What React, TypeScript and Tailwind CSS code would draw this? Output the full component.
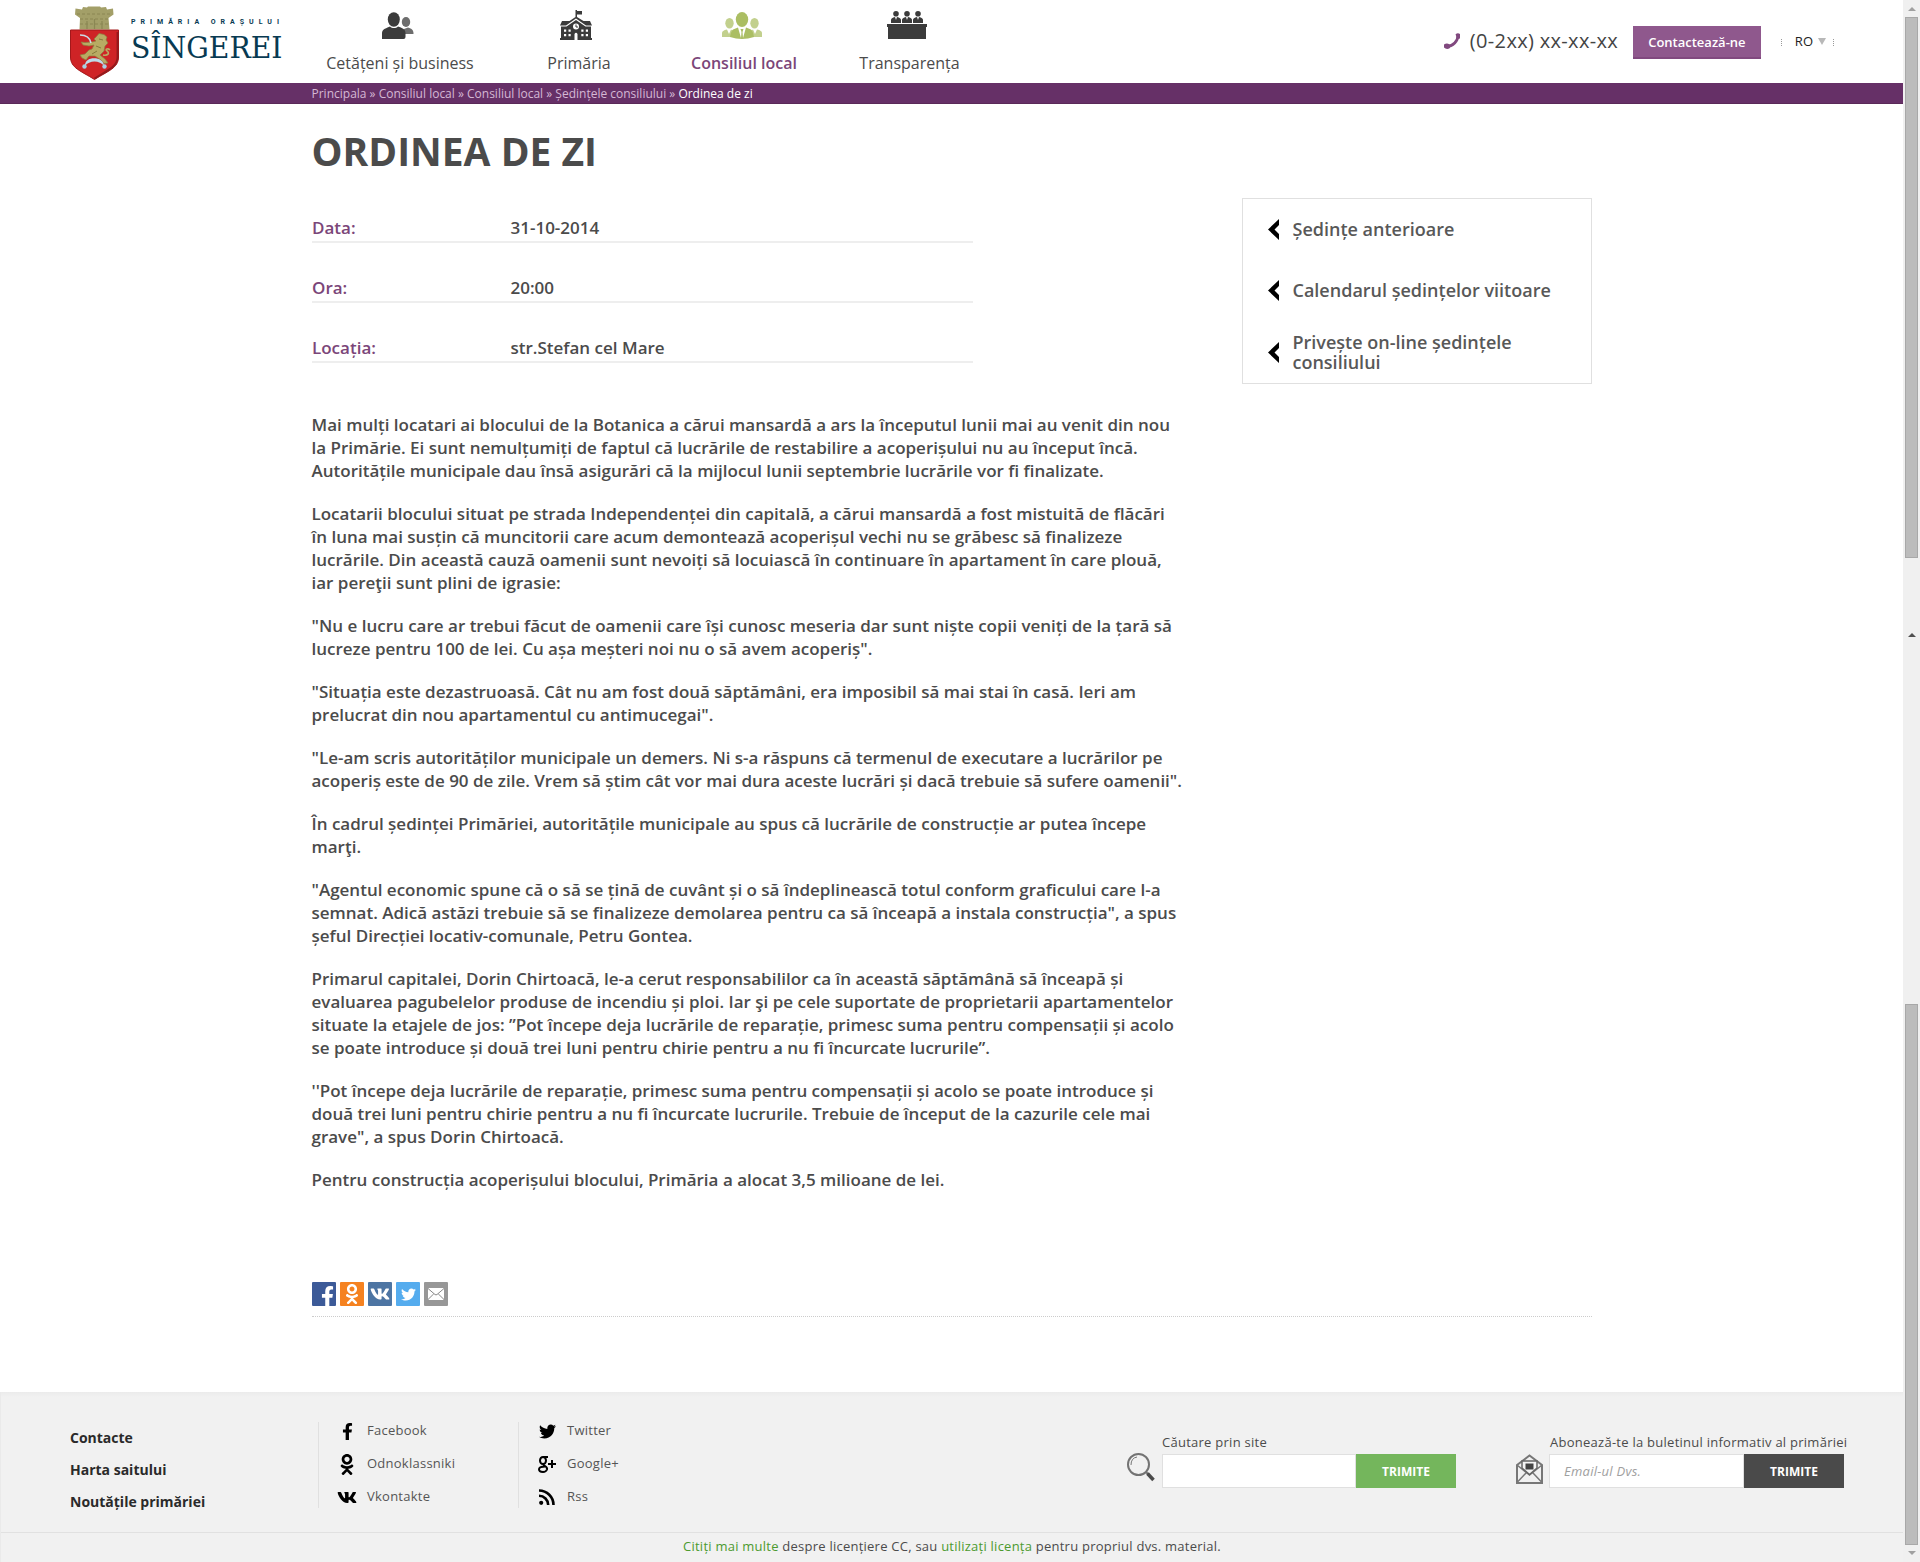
import React from 'react';
import { FaFacebookF, FaTwitter, FaVk, FaOdnoklassniki } from 'react-icons/fa';

function Crest() {
  return (
    <svg width="49" height="74" viewBox="0 0 49 74" className="block">
      <path d="M9.500 23.500L10 12L5 8.500L5.500 2.500L12 3.500L13 1L17 1.500L18 .5H30L31 1.500L36 1L37 3.500L43 2.500L43.500 8.500L38.500 12L39.500 23.500Z" fill="#a39f68" />
      <path d="M7 8h35M10 13h29M10 18h29" stroke="#85824f" strokeWidth=".8" strokeDasharray="3 2" fill="none" />
      <path d="M17 23V15M24.500 23V13M32 23V15" stroke="#8a8754" strokeWidth="1.200" />
      <path d="M.5 24H48.500V51C48.500 62 38 65 24.500 73.500C11 65 .5 62 .5 51Z" fill="#cf2326" stroke="#a3181b" />
      <path d="M47.500 26V51C47.500 61 37 64.500 24.500 72.500" fill="none" stroke="#941a1c" strokeWidth="1.800" />
      <path d="M26 31L29 27.500L34 28.500L37 31L36 34L38 37L35 40L34 45L30 49L35 53L38 57L34 57.500L31 54L25 50L19 50L16 54L12 52L10 49L15 48L19 44L22 43L24 39L19 40L13 39L11 36L15 36.500L22 36L26 35L24 33Z" fill="#b8ab63" stroke="#8b803f" strokeWidth=".7" />
      <path d="M33 49C38 50 40 47 37 45C34.500 43 38 42 40 44" stroke="#b8ab63" strokeWidth="1.600" fill="none" />
      <path d="M26 40L31 42M27 45L22 48M29 33L33 34" stroke="#857a3c" fill="none" />
      <path d="M10 29C17 29 20 32 21 37" stroke="#cbdbe6" strokeWidth="1.600" fill="none" />
      <path d="M15 60C14 49.500 34 49.500 34 60C30 54 19 54 15 60Z" fill="#bcdbe9" />
      <circle cx="14.500" cy="60.500" r="2.200" fill="#a9cfe0" />
      <circle cx="34.500" cy="60.500" r="2.200" fill="#a9cfe0" />
    </svg>
  );
}

function PeopleIcon() {
  return (
    <svg width="32" height="28" viewBox="0 0 32 28">
      <g fill="#6d6d6d">
        <ellipse cx="24" cy="10" rx="4.200" ry="5" />
        <path d="M22 22V17L26 15.500C30 16.500 31.500 18 31.500 22Z" />
      </g>
      <ellipse cx="11.800" cy="7.500" rx="6" ry="7.300" fill="#3b3b3b" />
      <path d="M0 27V21C0 17 5 16 8 14.500C10 16.500 14 16.500 16 14.500C20 16 23.500 17 23.500 21V25Q23.500 27 21.500 27Z" fill="#3b3b3b" />
    </svg>
  );
}

function TownHallIcon() {
  return (
    <svg width="32" height="30" viewBox="0 0 32 30">
      <g fill="#3b3b3b">
        <path d="M15.500 0H17V1H22V4.500H17V7L23.500 11H30L32 15.500H26L16 8.500L6 15.500H0L2 11H9.500L15.500 7Z" />
        <path d="M1 16.500H6.500L16 10L25.500 16.500H31V28H32V30H0V28H1Z" />
      </g>
      <circle cx="16" cy="16.500" r="3" fill="#fff" />
      <path d="M16 14.500V17H18" stroke="#3b3b3b" fill="none" />
      <g fill="#fff">
        <path d="M4 19.500h2.200v2.200H4zM8.500 19.500h2.200v2.200H8.500zM21.300 19.500h2.200v2.200h-2.200zM25.800 19.500H28v2.200h-2.200zM4 24h2.200v2.200H4zM8.500 24h2.200v2.200H8.500zM21.300 24h2.200v2.200h-2.200zM25.800 24H28v2.200h-2.200zM14.500 30V24Q16 21.500 17.500 24V30Z" />
      </g>
    </svg>
  );
}

function CouncilIcon() {
  return (
    <svg width="40" height="28" viewBox="0 0 40 28">
      <g fill="#c2d08d">
        <ellipse cx="7.500" cy="11.300" rx="4.200" ry="5.300" />
        <ellipse cx="32.500" cy="11.300" rx="4.200" ry="5.300" />
        <path d="M0 25V21Q0 18.500 5 17.500L7 22L9 17.500L11 19L9 25Z" />
        <path d="M40 25V21Q40 18.500 35 17.500L33 22L31 17.500L29 19L31 25Z" />
      </g>
      <g fill="#abbe63">
        <ellipse cx="20" cy="7.500" rx="6.200" ry="7.500" />
        <path d="M8 25Q9 19 11 17.500L16 15.500L19 26L19.500 20L18.500 17H21.500L20.500 20L21 26L24 15.500L29 17.500Q31 19 32 25Q20 29 8 25Z" />
      </g>
    </svg>
  );
}

function TribuneIcon() {
  return (
    <svg width="40" height="28" viewBox="0 0 40 28" fill="#3b3b3b">
      <circle cx="9" cy="2.800" r="2.800" />
      <circle cx="20" cy="2.800" r="2.800" />
      <circle cx="31" cy="2.800" r="2.800" />
      <path d="M4 12V9Q4 7 8 6L9 9L10 6Q14 7 14 9V12ZM15 12V9Q15 7 19 6L20 9L21 6Q25 7 25 9V12ZM26 12V9Q26 7 30 6L31 9L32 6Q36 7 36 9V12Z" />
      <path d="M0 13H40V16H39V28H1V16H0Z" />
    </svg>
  );
}

function PhoneIcon() {
  return (
    <svg width="17" height="16" viewBox="0 0 17 16" fill="none">
      <path d="M14 2C14 8 9 13.500 2.500 13.500" stroke="#81497f" strokeWidth="2.800" />
      <path d="M11.500 1.500Q13.500-.5 16 1V5.500L13.500 6ZM0 11.500Q3 9.500 5.500 11.500L6 15Q2.500 17 0 14.500Z" fill="#81497f" />
    </svg>
  );
}

const nav = [
  { label: 'Cetățeni și business', icon: <PeopleIcon />, box: 'ml-[44px] w-[148px]', top: 'mt-[12px] mr-[5px]', text: 'text-[#4b4b4b]' },
  { label: 'Primăria', icon: <TownHallIcon />, box: 'ml-[73px] w-[64px]', top: 'mt-[10px] mr-[6px]', text: 'text-[#4b4b4b]' },
  { label: 'Consiliul local', icon: <CouncilIcon />, box: 'ml-[80px] w-[106px]', top: 'mt-[12px] mr-[5px]', text: 'text-[#7b4679] font-semibold' },
  { label: 'Transparența', icon: <TribuneIcon />, box: 'ml-[62px] w-[101px]', top: 'mt-[11px] mr-[5px]', text: 'text-[#4b4b4b]' },
];

function Header() {
  return (
    <header className="flex h-[83px] bg-white">
      <div className="ml-[70px] mt-[6px] w-[50px]"><Crest /></div>
      <div className="ml-[11px] w-[151px]">
        <div className="mt-[17px] h-[10px] whitespace-nowrap text-[7px] leading-[10px] font-bold tracking-[4.98px] text-[#083a52] font-['Roboto']">PRIMĂRIA ORAȘULUI</div>
        <div className="mt-[3px] h-[36px] w-[158px] origin-left scale-x-[0.942] whitespace-nowrap text-[30px] leading-[36px] text-[#083a52] font-['DejaVu_Serif']">SÎNGEREI</div>
      </div>
      <nav className="flex">
        {nav.map((n) => (
          <a key={n.label} className={`flex flex-col items-center ${n.box}`}>
            <span className={`flex h-[30px] ${n.top}`}>{n.icon}</span>
            <span className={`mt-auto mb-[8px] whitespace-nowrap text-[16px] leading-[24px] ${n.text}`}>{n.label}</span>
          </a>
        ))}
      </nav>
      <div className="ml-auto flex">
        <span className="mt-[33px]"><PhoneIcon /></span>
        <span className="ml-[9px] mt-[26px] w-[149px] whitespace-nowrap text-[20px] leading-[30px] tracking-[0.33px] text-[#444]">(0-2xx) xx-xx-xx</span>
        <button className="ml-[14px] mt-[26px] flex h-[33px] w-[128px] items-center justify-center border-b-2 border-[#81497f] bg-[#8f588d] pt-[2px] text-[13px] font-semibold text-white">Contactează-ne</button>
        <span className="ml-[20px] mt-[39px] h-[7px] border-l border-dotted border-[#999]" />
        <span className="ml-[13px] mt-[31px] text-[13px] leading-[20px] text-[#222]">RO</span>
        <span className="ml-[5px] mt-[38px] size-0 border-x-[4px] border-t-[7px] border-x-transparent border-t-[#b8b8b8]" />
        <span className="ml-[7px] mr-[69px] mt-[39px] h-[7px] border-l border-dotted border-[#999]" />
      </div>
    </header>
  );
}

const info = [
  ['Data:', '31-10-2014'],
  ['Ora:', '20:00'],
  ['Locația:', 'str.Stefan cel Mare'],
];

const paragraphs = [
  ['Mai mulți locatari ai blocului de la Botanica a cărui mansardă a ars la începutul lunii mai au venit din nou', 'la Primărie. Ei sunt nemulțumiți de faptul că lucrările de restabilire a acoperișului nu au început încă.', 'Autoritățile municipale dau însă asigurări că la mijlocul lunii septembrie lucrările vor fi finalizate.'],
  ['Locatarii blocului situat pe strada Independenței din capitală, a cărui mansardă a fost mistuită de flăcări', 'în luna mai susțin că muncitorii care acum demontează acoperișul vechi nu se grăbesc să finalizeze', 'lucrările. Din această cauză oamenii sunt nevoiți să locuiască în continuare în apartament în care plouă,', 'iar pereţii sunt plini de igrasie:'],
  ['"Nu e lucru care ar trebui făcut de oamenii care își cunosc meseria dar sunt niște copii veniți de la țară să', 'lucreze pentru 100 de lei. Cu așa meșteri noi nu o să avem acoperiș".'],
  ['"Situația este dezastruoasă. Cât nu am fost două săptămâni, era imposibil să mai stai în casă. Ieri am', 'prelucrat din nou apartamentul cu antimucegai".'],
  ['"Le-am scris autorităților municipale un demers. Ni s-a răspuns că termenul de executare a lucrărilor pe', 'acoperiș este de 90 de zile. Vrem să știm cât vor mai dura aceste lucrări și dacă trebuie să sufere oamenii".'],
  ['În cadrul ședinței Primăriei, autoritățile municipale au spus că lucrările de construcție ar putea începe', 'marţi.'],
  ['"Agentul economic spune că o să se țină de cuvânt și o să îndeplinească totul conform graficului care l-a', 'semnat. Adică astăzi trebuie să se finalizeze demolarea pentru ca să înceapă a instala construcția", a spus', 'șeful Direcției locativ-comunale, Petru Gontea.'],
  ['Primarul capitalei, Dorin Chirtoacă, le-a cerut responsabililor ca în această săptămână să înceapă și', 'evaluarea pagubelelor produse de incendiu și ploi. Iar şi pe cele suportate de proprietarii apartamentelor', 'situate la etajele de jos: ”Pot începe deja lucrările de reparație, primesc suma pentru compensații și acolo', 'se poate introduce și două trei luni pentru chirie pentru a nu fi încurcate lucrurile”.'],
  ["''Pot începe deja lucrările de reparație, primesc suma pentru compensații și acolo se poate introduce și", 'două trei luni pentru chirie pentru a nu fi încurcate lucrurile. Trebuie de început de la cazurile cele mai', 'grave", a spus Dorin Chirtoacă.'],
  ['Pentru construcția acoperișului blocului, Primăria a alocat 3,5 milioane de lei.'],
];

function Arrow() {
  return (
    <svg width="11" height="21" viewBox="0 0 11 21" className="shrink-0">
      <path d="M11 0V6L6.500 10.500L11 15V21L0 10.500Z" />
    </svg>
  );
}

function Sidebar() {
  return (
    <aside className="mt-[94px] h-[186px] w-[350px] border border-[#e0e0e0] pl-[25px] text-[18px] leading-[20px] text-[#585858] font-semibold">
      <a className="flex h-[61px] items-center gap-[13.5px]"><Arrow /><span className="pb-[2px]">Ședințe anterioare</span></a>
      <a className="flex h-[61px] items-center gap-[13.5px]"><Arrow /><span className="pb-[2px]">Calendarul ședințelor viitoare</span></a>
      <a className="flex h-[63px] items-center gap-[13.5px]"><Arrow /><span className="pb-[2px]">Privește on-line ședințele<br />consiliului</span></a>
    </aside>
  );
}

function Share() {
  return (
    <div className="flex h-[35px] gap-[4px] border-b border-dotted border-[#ccc]">
      <span className="flex size-6 items-end justify-end overflow-hidden rounded-[1px] bg-[#3c5a98] pr-[2px] text-white"><FaFacebookF className="-mb-[1px] h-[21px] w-[13px]" /></span>
      <span className="flex size-6 items-center justify-center rounded-[1px] bg-[#f58220] text-white"><FaOdnoklassniki className="size-[20px]" /></span>
      <span className="flex size-6 items-center justify-center rounded-[1px] bg-[#4d75a3] text-white"><FaVk className="size-[20px]" /></span>
      <span className="flex size-6 items-center justify-center rounded-[1px] bg-[#55acee] text-white"><FaTwitter className="size-[15px]" /></span>
      <span className="flex size-6 items-center justify-center rounded-[1px] bg-[#979797]">
        <svg width="16" height="12" viewBox="0 0 16 12"><rect width="16" height="12" rx="1" fill="#fff" /><path d="M0 .5L7 6.500Q8 7.300 9 6.500L16 .5M0 11.500L5.800 5.800M16 11.500L10.200 5.800" fill="none" stroke="#888" /></svg>
      </span>
    </div>
  );
}

function RssIcon() {
  return (
    <svg width="16" height="16" viewBox="0 0 16 16" fill="none" stroke="#000" strokeWidth="2.600">
      <circle cx="2.200" cy="13.800" r="2.100" fill="#000" stroke="none" />
      <path d="M0 6.800A9.200 9.200 0 0 1 9.200 16M0 1.500A14.500 14.500 0 0 1 14.500 16" />
    </svg>
  );
}

function GooglePlusIcon() {
  return (
    <svg width="18" height="17" viewBox="0 0 18 17" fill="none" stroke="#000">
      <ellipse cx="5" cy="4.500" rx="3" ry="3.500" strokeWidth="2" />
      <path d="M5 1H10M6 8Q5 9 7 10Q9.500 11.500 9 13.500Q8 16 5 16Q1 16 1 13.300Q1 10.500 7 10.500" strokeWidth="2" />
      <path d="M14 4V12M10 8H18" strokeWidth="2" />
    </svg>
  );
}

function SocialLink({ icon, label }: { icon: React.ReactNode; label: string }) {
  return (
    <a className="flex h-[33px] items-start">
      <span className="-mt-[2px] flex h-[22px] w-[20px] items-center justify-center">{icon}</span>
      <span className="-mt-[2px] ml-[10px] text-[13px] leading-[20px] tracking-[0.25px] text-[#555]">{label}</span>
    </a>
  );
}

function SearchIcon() {
  return (
    <svg width="28" height="29" viewBox="0 0 28 29" fill="none">
      <circle cx="11.500" cy="11.500" r="10.500" stroke="#737373" strokeWidth="2" />
      <path d="M4 12Q4 5 10 4" stroke="#777" />
      <path d="M19 19L21 21" stroke="#737373" strokeWidth="2" />
      <path d="M20.500 20.500L26.500 27" stroke="#4a4a4a" strokeWidth="3.500" />
    </svg>
  );
}

function MailIcon() {
  return (
    <svg width="27" height="31" viewBox="0 0 27 31" fill="none" stroke="#777" strokeWidth="2">
      <path d="M1 11L13.500 1.500L26 11V29H1Z" fill="#f1f1f1" />
      <path d="M1 11L13.500 21L26 11M1 28.500L10 19M26 28.500L17 19" strokeWidth="1.500" />
      <path d="M6 14V7H21V14L13.500 20.500Z" fill="#f4f4f4" stroke="#666" strokeWidth="1.500" />
      <rect x="9.500" y="9.500" width="8" height="6" fill="#444" stroke="none" />
    </svg>
  );
}

function Footer() {
  return (
    <footer className="h-[170px] border-l border-[#eaeaea] bg-[#f1f1f1]">
      <div className="flex h-[141px] border-b border-[#e1e1e1] bg-[linear-gradient(#ebebeb,#f1f1f1_5px)]">
        <div className="ml-[69px] mt-[30px] flex w-[248px] flex-col text-[14px] font-bold text-[#2a2a2a]">
          <a className="h-[32px] leading-[32px]">Contacte</a>
          <a className="h-[32px] leading-[32px]">Harta saitului</a>
          <a className="h-[32px] leading-[32px]">Noutățile primăriei</a>
        </div>
        <div className="mt-[30px] h-[86px] w-[200px] border-l border-[#e0e0e0] pl-[18px]">
          <SocialLink label="Facebook" icon={<FaFacebookF className="h-[17px] w-[11px]" />} />
          <SocialLink label="Odnoklassniki" icon={<FaOdnoklassniki className="size-[21px]" />} />
          <SocialLink label="Vkontakte" icon={<FaVk className="size-[21px]" />} />
        </div>
        <div className="mt-[30px] h-[86px] w-[200px] border-l border-[#e0e0e0] pl-[18px]">
          <SocialLink label="Twitter" icon={<FaTwitter className="size-[17px]" />} />
          <SocialLink label="Google+" icon={<GooglePlusIcon />} />
          <SocialLink label="Rss" icon={<RssIcon />} />
        </div>
        <div className="ml-auto flex pt-[40px] text-[13px] tracking-[0.26px] text-[#4b4b4b]">
          <span className="mt-[21px] w-[35px]"><SearchIcon /></span>
          <div className="w-[294px]">
            <div className="h-[22px] leading-[20px]">Căutare prin site</div>
            <div className="flex h-[34px]">
              <div className="w-[194px] border border-[#e0e0e0] bg-white" />
              <button className="w-[100px] bg-[#74b65c] pt-[2px] text-[12px] font-bold tracking-normal text-white">TRIMITE</button>
            </div>
          </div>
          <span className="ml-[60px] mt-[22px] w-[33px]"><MailIcon /></span>
          <div className="mr-[59px] w-[295px]">
            <div className="h-[22px] whitespace-nowrap pl-[1px] leading-[20px]">Abonează-te la buletinul informativ al primăriei</div>
            <div className="flex h-[34px]">
              <div className="w-[195px] border border-[#e0e0e0] bg-white pl-[14px] text-[13px] leading-[33px] text-[#a0a0a0] italic">Email-ul Dvs.</div>
              <button className="w-[100px] bg-[#4a4a4a] pt-[2px] text-[12px] font-bold tracking-normal text-white">TRIMITE</button>
            </div>
          </div>
        </div>
      </div>
      <p className="text-center text-[13px] leading-[26px] tracking-[0.24px] text-[#4b4b4b]"><span className="text-[#4c9a2f]">Citiți mai multe</span> despre licențiere CC, sau <span className="text-[#4c9a2f]">utilizați licența</span> pentru propriul dvs. material.</p>
    </footer>
  );
}

function Scrollbar() {
  return (
    <div className="flex h-[1562px] w-[17px] flex-col items-center bg-[#f0f0f0]">
      <span className="mt-[7px] border-x-[4px] border-b-[4px] border-x-transparent border-b-[#a0a0a0]" />
      <span className="mt-[6px] h-[541px] w-[13px] border border-[#a8a8a8] bg-[#bcbcbc]" />
      <span className="mt-[75px] border-x-[4px] border-b-[4px] border-x-transparent border-b-[#505050]" />
      <span className="mt-[367px] h-[541px] w-[13px] border border-[#a8a8a8] bg-[#bcbcbc]" />
      <span className="mt-[6px] border-x-[4px] border-t-[4px] border-x-transparent border-t-[#a0a0a0]" />
    </div>
  );
}

export default function App() {
  return (
    <div className="flex h-[1562px] w-[1920px] overflow-hidden bg-white font-['Open_Sans',sans-serif]">
      <div className="w-[1903px]">
        <Header />
        <div className="h-[21px] border-b border-[#5a2958] bg-[#663067] pl-[311.5px] text-[12px] leading-[22px] text-[#d5b8d5]">
          Principala » Consiliul local » Consiliul local » Ședințele consiliului » <span className="text-white">Ordinea de zi</span>
        </div>
        <main className="ml-[312px] h-[1288px] w-[1280px]">
          <div className="flex h-[1178px] justify-between">
            <div className="w-[900px]">
              <h1 className="-ml-[0.5px] pt-[22px] text-[39px] leading-[50px] font-bold text-[#4b4b4b]">ORDINEA DE ZI</h1>
              <dl className="w-[661px] pt-[7px] text-[17px] font-semibold">
                {info.map(([k, v]) => (
                  <div key={k} className="flex h-[60px] items-end border-b-2 border-[#eee] leading-[24px]">
                    <dt className="w-[198.5px] pb-[1px] text-[#7b4679]">{k}</dt>
                    <dd className="pb-[1px] text-[#4b4b4b]">{v}</dd>
                  </div>
                ))}
              </dl>
              <article className="-ml-[0.5px] flex flex-col gap-[20px] pt-[50px] text-[17px] leading-[23px] font-semibold text-[#4b4b4b]">
                {paragraphs.map((lines) => (
                  <p key={lines[0]}>
                    {lines.map((l) => <span key={l} className="block whitespace-nowrap">{l}</span>)}
                  </p>
                ))}
              </article>
            </div>
            <Sidebar />
          </div>
          <Share />
        </main>
        <Footer />
      </div>
      <Scrollbar />
    </div>
  );
}
